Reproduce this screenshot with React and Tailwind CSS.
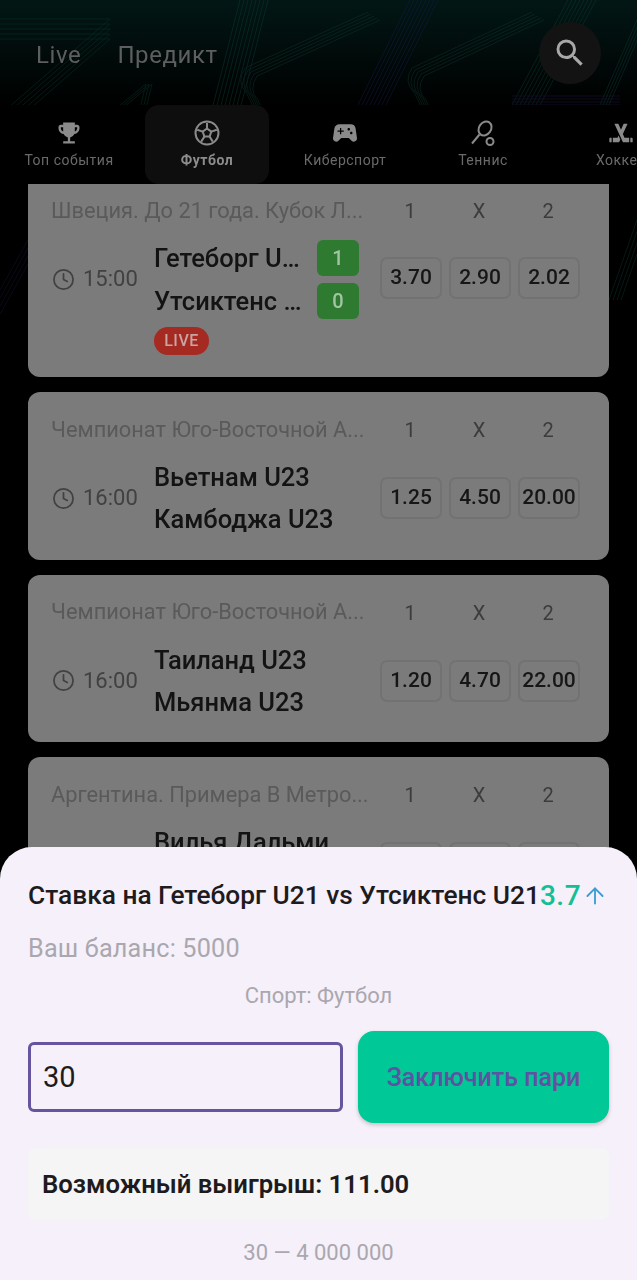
import React from 'react';
import { Clock, ArrowUp } from 'lucide-react';
import { MdEmojiEvents, MdSportsEsports, MdSportsHockey, MdSearch } from 'react-icons/md';

const tabs = [
  { label: 'Топ события', icon: <MdEmojiEvents size={28} /> },
  { label: 'Футбол', icon: <BallIcon />, active: true },
  { label: 'Киберспорт', icon: <MdSportsEsports size={30} /> },
  { label: 'Теннис', icon: <TennisIcon /> },
  { label: 'Хоккей', icon: <MdSportsHockey size={28} /> },
];

const matches = [
  {
    league: 'Швеция. До 21 года. Кубок Л...',
    time: '15:00',
    home: 'Гетеборг U…',
    away: 'Утсиктенс …',
    score: [1, 0],
    live: true,
    odds: ['3.70', '2.90', '2.02'],
  },
  { league: 'Чемпионат Юго-Восточной А...', time: '16:00', home: 'Вьетнам U23', away: 'Камбоджа U23', odds: ['1.25', '4.50', '20.00'] },
  { league: 'Чемпионат Юго-Восточной А...', time: '16:00', home: 'Таиланд U23', away: 'Мьянма U23', odds: ['1.20', '4.70', '22.00'] },
  { league: 'Аргентина. Примера В Метро...', time: '16:00', home: 'Вилья Дальми', away: 'Депортиво', odds: ['2.10', '3.00', '3.40'] },
];

function BallIcon() {
  return (
    <svg width="26" height="26" viewBox="0 0 26 26" fill="none" stroke="currentColor" strokeWidth="2" strokeLinejoin="round">
      <circle cx="13" cy="13" r="11.5" />
      <path d="M13 8.5 L17.3 11.6 L15.6 16.6 L10.4 16.6 L8.7 11.6 Z" />
      <path d="M13 8.5 V3 M17.3 11.6 L22.8 9.8 M15.6 16.6 L18.8 21.6 M10.4 16.6 L7.2 21.6 M8.7 11.6 L3.2 9.8" />
    </svg>
  );
}

function TennisIcon() {
  return (
    <svg width="28" height="28" viewBox="0 0 28 28" fill="none" stroke="currentColor" strokeWidth="2">
      <ellipse cx="16" cy="9.5" rx="6" ry="7.5" transform="rotate(35 16 9.5)" />
      <path d="M10.5 15.5 L3 24.5" />
      <circle cx="21" cy="22.5" r="3.5" />
    </svg>
  );
}

// parallel stripes of the decorative backdrop
function Stripes({ d, color, count = 6, dx = 4, dy = 0 }) {
  return Array.from({ length: count }, (_, i) => (
    <path key={i} d={d} transform={`translate(${i * dx} ${i * dy})`} stroke={color} strokeWidth="1" fill="none" />
  ));
}

function Backdrop() {
  return (
    <svg className="absolute left-0 top-0" width="637" height="400" viewBox="0 0 637 400">
      <defs>
        <linearGradient id="topGlow" x1="0" y1="0" x2="0" y2="1">
          <stop offset="0" stopColor="#021715" />
          <stop offset="1" stopColor="#000000" />
        </linearGradient>
      </defs>
      <rect width="637" height="105" fill="url(#topGlow)" />
      <g opacity="0.45">
        <Stripes d="M0 19 L110 19 L0 115" color="#0c3a32" count={5} dx={0} dy={5} />
        <Stripes d="M96 125 L146 84 L136 125" color="#0c3a32" count={3} dx={3} />
        <Stripes d="M208 125 L240 0" color="#0d4038" count={8} dx={4} />
        <Stripes d="M368 12 L245 68 Q236 82 246 92 L262 125" color="#123a33" count={5} dx={3} dy={2} />
        <Stripes d="M348 125 L410 0" color="#17204a" count={8} dx={4} />
        <Stripes d="M532 12 L412 68 Q403 82 414 92 L430 125" color="#123a33" count={5} dx={3} dy={2} />
        <Stripes d="M512 105 L568 0" color="#0d4038" count={8} dx={4} />
        <Stripes d="M512 96 L620 96" color="#231a48" count={4} dx={0} dy={3} />
        <Stripes d="M600 105 L637 20" color="#0d4038" count={4} dx={3} />
        <Stripes d="M0 290 L28 240" color="#1a1538" count={4} dx={0} dy={8} />
        <Stripes d="M609 300 L637 220" color="#0c3a32" count={4} dx={4} />
      </g>
    </svg>
  );
}

function MatchCard({ match }) {
  return (
    <div className={`shrink-0 rounded-[12px] bg-[#7b7b7b] pl-[23px] pr-[29px] pt-[26px] ${match.live ? 'h-[204px]' : 'h-[167.5px]'}`}>
      <div className="flex h-[24px] items-center">
        <div className="w-[328px] truncate text-[21.8px] text-[#5a5a5a]">{match.league}</div>
        <div className="grid grid-cols-[62px_62px_62px] gap-x-[7px] text-center text-[20px] text-[#3c3c3c]">
          <span>1</span>
          <span>X</span>
          <span>2</span>
        </div>
      </div>
      <div className="mt-[17px] flex items-start">
        <div className="mt-[18px] flex w-[103px] items-center gap-[8px] pl-[1px] text-[#414141]">
          <Clock size={23} strokeWidth={1.8} />
          <span className="text-[22px] leading-[42px] whitespace-nowrap">{match.time}</span>
        </div>
        <div className="w-[226px]">
          <div className={`flex flex-col ${match.live ? 'gap-[7px]' : 'gap-[4px]'}`}>
            <Team name={match.home} score={match.score?.[0]} />
            <Team name={match.away} score={match.score?.[1]} />
          </div>
          {match.live && (
            <div className="mt-[8px] flex h-[28px] w-[55px] items-center justify-center rounded-full bg-[#a52a22] text-[16px] font-medium tracking-[0.5px] text-[#c9a5a1]">
              LIVE
            </div>
          )}
        </div>
        <div className={`mt-[17px] grid grid-cols-[62px_62px_62px] gap-x-[7px] ${match.live ? '' : 'pt-[1px]'}`}>
          {match.odds.map((odd) => (
            <div key={odd} className="flex h-[42px] items-center justify-center rounded-[7px] border-2 border-[#727272] text-[21px] font-medium text-[#161616]">
              {odd}
            </div>
          ))}
        </div>
      </div>
    </div>
  );
}

function Team({ name, score }) {
  return (
    <div className="flex items-center">
      <span className={`w-[163px] text-[25.5px] font-medium leading-[36px] whitespace-nowrap text-[#131313] ${score === undefined ? 'h-[38px]' : ''}`}>{name}</span>
      {score !== undefined && (
        <span className="flex h-[36px] w-[42px] items-center justify-center rounded-[6px] bg-[#2d7a30] text-[20px] font-medium text-[#a3c5a4]">{score}</span>
      )}
    </div>
  );
}

export default function App() {
  return (
    <div className="relative h-[1280px] w-[637px] overflow-hidden bg-black font-['Roboto',sans-serif]">
      <Backdrop />

      <header className="relative flex h-[105px] items-center pl-[36px] pr-[36px] pt-[5px] text-[24px] tracking-[0.6px] text-[#5e5e5e]">
        <span>Live</span>
        <span className="ml-[36px]">Предикт</span>
        <button className="ml-auto -mt-[5px] flex h-[62px] w-[62px] items-center justify-center rounded-full bg-[#131313] text-[#a8a8a8]">
          <MdSearch size={36} />
        </button>
      </header>

      <nav className="relative flex h-[79px] bg-black">
        {tabs.map((tab) => (
          <div key={tab.label} className="w-[138px] shrink-0 px-[7px]">
            <div className={`flex h-[79px] flex-col items-center rounded-[14px] pt-[14px] text-[14px] tracking-[0.5px] whitespace-nowrap ${tab.active ? 'bg-[#0e0e0e] font-bold text-[#8c8c8c]' : 'text-[#6a6a6a]'}`}>
              <div className="flex h-[28px] items-center text-[#8a8a8a]">{tab.icon}</div>
              <span className="mt-[3px] leading-[20px]">{tab.label}</span>
            </div>
          </div>
        ))}
      </nav>

      <main className="relative h-[1096px] overflow-hidden px-[28px]">
        <div className="-mt-[11px] flex flex-col gap-[15px]">
          {matches.map((match, i) => (
            <MatchCard key={i} match={match} />
          ))}
        </div>
      </main>

      <section className="absolute bottom-0 left-0 h-[433px] w-[637px] rounded-t-[32px] bg-[#f5f0f9] px-[28px] pt-[32px]">
        <div className="flex h-[34px] items-center">
          <span className="text-[26.3px] font-medium whitespace-nowrap text-[#1d1b20]">Ставка на Гетеборг U21 vs Утсиктенс U21</span>
          <span className="text-[28px] font-medium tracking-[0.5px] text-[#14bf95]">3.7</span>
          <ArrowUp className="ml-[1px] shrink-0 text-[#3a9bd5]" size={26} strokeWidth={1.7} />
        </div>
        <div className="mt-[20px] text-[25.2px] leading-[32px] tracking-[0.2px] text-[#aaa7ae]">Ваш баланс: 5000</div>
        <div className="mt-[17px] text-center text-[22px] leading-[28px] text-[#aaa7ae]">Спорт: Футбол</div>
        <div className="mt-[21px] flex items-center gap-[15px]">
          <div className="flex h-[70px] w-[315px] items-center rounded-[6px] border-[3px] border-[#67549f] pl-[12px] pt-[1px] text-[29px] text-[#1d1b20]">30</div>
          <button className="h-[92px] w-[251px] rounded-[16px] bg-[#00c896] pt-[2px] text-[25px] font-medium text-[#5f52a3] shadow-[0_2px_4px_rgba(0,0,0,0.2)]">Заключить пари</button>
        </div>
        <div className="mt-[25px] flex h-[72px] items-center rounded-[8px] bg-[#f5f5f5] pl-[14px] text-[25.7px] font-semibold text-[#1d1b20]">
          Возможный выигрыш: 111.00
        </div>
        <div className="mt-[19px] text-center text-[22px] leading-[28px] text-[#aaa7ae]">30 — 4 000 000</div>
      </section>
    </div>
  );
}
